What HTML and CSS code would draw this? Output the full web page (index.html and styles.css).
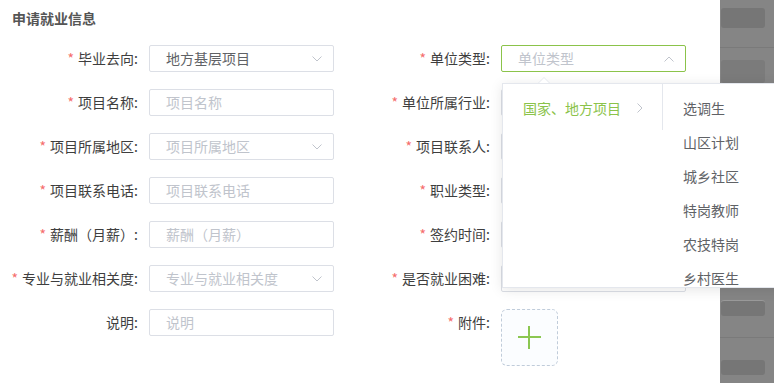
FILE: index.html
```html
<!DOCTYPE html>
<html lang="zh-CN">
<head>
<meta charset="utf-8">
<title>申请就业信息</title>
<link rel="stylesheet" href="styles.css">
</head>
<body>
<div class="page">
  <main class="main">
    <h3 class="title">申请就业信息</h3>
    <div class="form">
      <div class="item"><label class="label req">毕业去向:</label><div class="control select"><span class="value">地方基层项目</span><svg class="chev" viewBox="0 0 10 6"><polyline points="0.5,0.5 5,5 9.5,0.5"/></svg></div></div>
      <div class="item"><label class="label req">单位类型:</label><div class="control select focus"><span class="ph">单位类型</span><svg class="chev" viewBox="0 0 10 6"><polyline points="0.5,5.5 5,1 9.5,5.5"/></svg></div></div>

      <div class="item"><label class="label req">项目名称:</label><div class="control"><span class="ph">项目名称</span></div></div>
      <div class="item"><label class="label req">单位所属行业:</label><div class="control select"></div></div>

      <div class="item"><label class="label req">项目所属地区:</label><div class="control select"><span class="ph">项目所属地区</span><svg class="chev" viewBox="0 0 10 6"><polyline points="0.5,0.5 5,5 9.5,0.5"/></svg></div></div>
      <div class="item"><label class="label req">项目联系人:</label><div class="control"></div></div>

      <div class="item"><label class="label req">项目联系电话:</label><div class="control"><span class="ph">项目联系电话</span></div></div>
      <div class="item"><label class="label req">职业类型:</label><div class="control select"></div></div>

      <div class="item"><label class="label req">薪酬（月薪）:</label><div class="control"><span class="ph">薪酬（月薪）</span></div></div>
      <div class="item"><label class="label req">签约时间:</label><div class="control"></div></div>

      <div class="item"><label class="label req">专业与就业相关度:</label><div class="control select"><span class="ph">专业与就业相关度</span><svg class="chev" viewBox="0 0 10 6"><polyline points="0.5,0.5 5,5 9.5,0.5"/></svg></div></div>
      <div class="item"><label class="label req">是否就业困难:</label><div class="control select"></div></div>

      <div class="item"><label class="label">说明:</label><div class="control"><span class="ph">说明</span></div></div>
      <div class="item"><label class="label req">附件:</label><div class="upload"><span class="plus"></span></div></div>
    </div>
  </main>
  <aside class="side">
    <div class="side-top">
      <div class="blk blk1"></div>
      <div class="line"></div>
      <div class="blk blk2"></div>
    </div>
    <div class="side-bottom">
      <div class="blk blk3"></div>
      <div class="line"></div>
      <div class="blk blk4"></div>
    </div>
  </aside>

  <div class="cascader">
    <span class="arrow"></span>
    <div class="menus">
      <ul class="menu menu1">
        <li class="opt active"><span class="opt-text">国家、地方项目</span><svg class="right" viewBox="0 0 6 10"><polyline points="0.5,0.5 5,5 0.5,9.5"/></svg></li>
      </ul>
      <ul class="menu menu2">
        <li class="opt">选调生</li>
        <li class="opt">山区计划</li>
        <li class="opt">城乡社区</li>
        <li class="opt">特岗教师</li>
        <li class="opt">农技特岗</li>
        <li class="opt">乡村医生</li>
      </ul>
    </div>
  </div>
</div>
</body>
</html>
```

FILE: styles.css
```css
* { box-sizing: border-box; }
html, body { margin: 0; padding: 0; background: #fff; }
body {
  font-family: "Noto Sans CJK SC", "Noto Sans", sans-serif;
  font-size: 14px;
  color: #606266;
}
.page {
  position: relative;
  display: flex;
  width: 774px;
  height: 383px;
  overflow: hidden;
}
.main { width: 720px; flex: none; }
.title {
  margin: 0;
  padding: 8px 0 0 12px;
  font-size: 14px;
  line-height: 20px;
  font-weight: bold;
  color: #555;
}
.form {
  display: grid;
  grid-template-columns: 352px 352px;
  margin-top: 17px;
}
.item {
  display: flex;
  align-items: flex-start;
  margin-bottom: 17px;
}
.label {
  width: 149px;
  padding-right: 11px;
  text-align: right;
  line-height: 27px;
  color: #3e3e3e;
  white-space: nowrap;
}
.label.req::before {
  content: "*";
  color: #f56c6c;
  margin-right: 4px;
}
.control {
  width: 185px;
  height: 27px;
  border: 1px solid #dcdfe6;
  border-radius: 2px;
  padding-left: 16px;
  display: flex;
  align-items: center;
  line-height: 25px;
  position: relative;
  background: #fff;
}
.control.focus { border-color: #8bc34a; }
.value { color: #606266; }
.ph { color: #c0c4cc; }
.chev {
  position: absolute;
  right: 11px;
  top: 10px;
  width: 10px;
  height: 6px;
  fill: none;
  stroke: #c0c4cc;
  stroke-width: 1;
}
.upload {
  width: 57px;
  height: 57px;
  border: 1px dashed #c0ccda;
  border-radius: 6px;
  background: #fbfdff;
  display: flex;
  align-items: center;
  justify-content: center;
}
.plus {
  position: relative;
  width: 23px;
  height: 23px;
}
.plus::before, .plus::after {
  content: "";
  position: absolute;
  background: #8bc751;
}
.plus::before { left: 0; right: 0; top: 10px; height: 2px; }
.plus::after { top: 0; bottom: 0; left: 10px; width: 2px; }

/* right side gray strip */
.side {
  width: 54px;
  flex: none;
  background: #858585;
  display: flex;
  flex-direction: column;
  justify-content: space-between;
}
.side-top, .side-bottom { display: flex; flex-direction: column; }
.blk { background: #767676; margin-left: 1px; width: 44px; border-radius: 3px; }
.line { height: 1px; background: #7a7a7a; }
.blk1 { margin-top: 8px; height: 20px; }
.side-top .line { margin-top: 19px; }
.blk2 { margin-top: 12px; height: 23px; background: #7b7b7b; }
.side-bottom { height: 95px; }
.blk3 { margin-top: 12px; height: 16px; border-top: 1px solid #9a9a9a; }
.side-bottom .line { margin-top: 21px; }
.blk4 { margin-top: 22px; height: 15px; }

/* cascader dropdown */
.cascader {
  position: absolute;
  left: 502px;
  top: 83px;
  width: 300px;
  height: 205px;
  background: #fff;
  border: 1px solid #e4e7ed;
  box-shadow: 0 2px 12px rgba(0, 0, 0, 0.1);
}
.arrow {
  position: absolute;
  left: 35px;
  top: -7px;
  width: 0;
  height: 0;
  border-left: 6px solid transparent;
  border-right: 6px solid transparent;
  border-bottom: 6px solid #e4e7ed;
}
.arrow::after {
  content: "";
  position: absolute;
  left: -5px;
  top: 1px;
  border-left: 5px solid transparent;
  border-right: 5px solid transparent;
  border-bottom: 5px solid #fff;
}
.menus {
  display: flex;
  align-items: flex-start;
  height: 100%;
  overflow: hidden;
}
.menu {
  list-style: none;
  margin: 0;
  padding: 7px 0 5px;
}
.menu1 {
  width: 160px;
  border-right: 1px solid #e4e7ed;
}
.opt {
  height: 34px;
  line-height: 34px;
  padding: 0 20px;
  color: #606266;
  position: relative;
  white-space: nowrap;
}
.opt-text { display: inline-block; }
.opt.active { color: #8bc34a; }
.right {
  position: absolute;
  right: 19px;
  top: 12px;
  width: 6px;
  height: 10px;
  fill: none;
  stroke: #c0c4cc;
  stroke-width: 1;
}
```
